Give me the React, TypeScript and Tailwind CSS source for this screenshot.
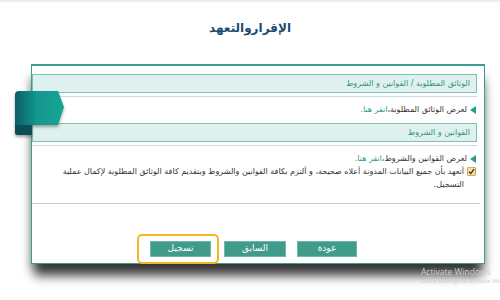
import React from "react";

const Tri = () => (
  <svg width="6" height="8" viewBox="0 0 6 8" className="shrink-0">
    <path d="M6 0 L0 4 L6 8 Z" fill="#2a9d8c" />
  </svg>
);

export default function App() {
  return (
    <div
      className="relative w-[500px] h-[300px] overflow-hidden bg-white border-t-2 border-[#ececec]"
      style={{ fontFamily: '"DejaVu Sans", "Noto Sans", sans-serif' }}
    >
      <div className="pt-[17px] h-[62px] text-center text-[12px] font-bold text-[#1d4b6e]" dir="rtl">
        الإقراروالتعهد
      </div>

      <div className="relative ml-[31px] w-[454px] h-[200px] bg-white border border-t-2 border-[#3b9c93] shadow-[0_15px_10px_-3px_rgba(0,0,0,0.7),-5px_8px_8px_-3px_rgba(0,0,0,0.2),5px_8px_8px_-3px_rgba(0,0,0,0.15)]">
        <div className="pr-[7px] pt-[8px]" dir="rtl">
          <div className="h-[19px] bg-[#dff1ee] border border-[#7cc1b6] flex items-center pr-[6px] text-[8px] text-[#2f9483]">
            الوثائق المطلوبة / القوانين و الشروط
          </div>
          <div className="mt-[3px] h-[1px] bg-[#cdd9e2]" />
          <div className="h-[26px] flex items-center gap-[3px] pr-[1px] text-[8px] text-[#333] whitespace-nowrap">
            <Tri />
            <span>
              لعرض الوثائق المطلوبة،<span className="text-[#2a9d8c]">انقر هنا.</span>
            </span>
          </div>
          <div className="h-[19px] bg-[#dff1ee] border border-[#7cc1b6] flex items-center pr-[6px] text-[8px] text-[#2f9483]">
            القوانين و الشروط
          </div>
          <div className="mt-[3px] h-[1px] bg-[#cdd9e2]" />
          <div className="pt-[6px] pr-[1px] text-[8px] text-[#333] leading-[13px] whitespace-nowrap">
            <div className="flex items-center gap-[3px]">
              <Tri />
              <span>
                لعرض القوانين والشروط،<span className="text-[#2a9d8c]">انقر هنا.</span>
              </span>
            </div>
            <div className="flex items-start gap-[3px]">
              <span className="mt-[2px] w-[9px] h-[9px] shrink-0 rounded-[1px] border border-[#d9a455] bg-[#f6dcae] flex items-center justify-center">
                <svg width="7" height="7" viewBox="0 0 7 7">
                  <path d="M1 3.8 L2.8 5.6 L6 1.2" stroke="#333" strokeWidth="1.3" fill="none" />
                </svg>
              </span>
              <span>
                أتعهد بأن جميع البيانات المدونة أعلاه صحيحة، و ألتزم بكافة القوانين والشروط وبتقديم كافة الوثائق المطلوبة لإكمال عملية
                <br />
                التسجيل.
              </span>
            </div>
          </div>
        </div>
        <div className="mt-[12px] mr-[4px] h-[1px] bg-[#c9c9c9]" />

        <div className="mt-[37px] ml-[118px] flex items-center" dir="ltr">
          <div className="relative">
            <div className="w-[61px] h-[16px] bg-[#3f9b8a] border border-[#72b8aa] flex items-center justify-center text-[9px] text-white" dir="rtl">
              تسجيل
            </div>
            <span className="absolute left-[-13px] top-[-7px] w-[82px] h-[30px] rounded-[5px] border-2 border-[#f4b624]" />
          </div>
          <div className="ml-[13px] w-[62px] h-[16px] bg-[#3f9b8a] border border-[#72b8aa] flex items-center justify-center text-[9px] text-white" dir="rtl">
            السابق
          </div>
          <div className="ml-[11px] w-[60px] h-[16px] bg-[#3f9b8a] border border-[#72b8aa] flex items-center justify-center text-[9px] text-white" dir="rtl">
            عودة
          </div>
        </div>
      </div>

      <svg className="absolute left-[12px] top-[87px]" width="56" height="50" viewBox="0 0 56 50">
        <defs>
          <linearGradient id="rg" x1="0" y1="0" x2="1" y2="0">
            <stop offset="0" stopColor="#0b5f68" />
            <stop offset="0.45" stopColor="#12978f" />
            <stop offset="1" stopColor="#14a594" />
          </linearGradient>
          <filter id="sh" x="-20%" y="-20%" width="140%" height="150%">
            <feDropShadow dx="0" dy="2" stdDeviation="1.5" floodColor="#000" floodOpacity="0.35" />
          </filter>
        </defs>
        <g filter="url(#sh)">
          <path d="M3 36 L3 44 Q3 46 5 46 L20 46 L20 36 Z" fill="#0a4d55" />
          <path d="M7 2 L46 2 L52 18 L46 36 L3 36 L3 6 Q3 2 7 2 Z" fill="url(#rg)" />
        </g>
      </svg>

      <div className="absolute left-[421px] top-[264px] text-[#cfcfcf] whitespace-nowrap" style={{ fontFamily: '"Open Sans", sans-serif' }}>
        <div className="text-[8.5px] leading-[11px]">Activate Windows</div>
        <div className="text-[6px] leading-[9px]">Go to Settings to activate Windows.</div>
      </div>
    </div>
  );
}
